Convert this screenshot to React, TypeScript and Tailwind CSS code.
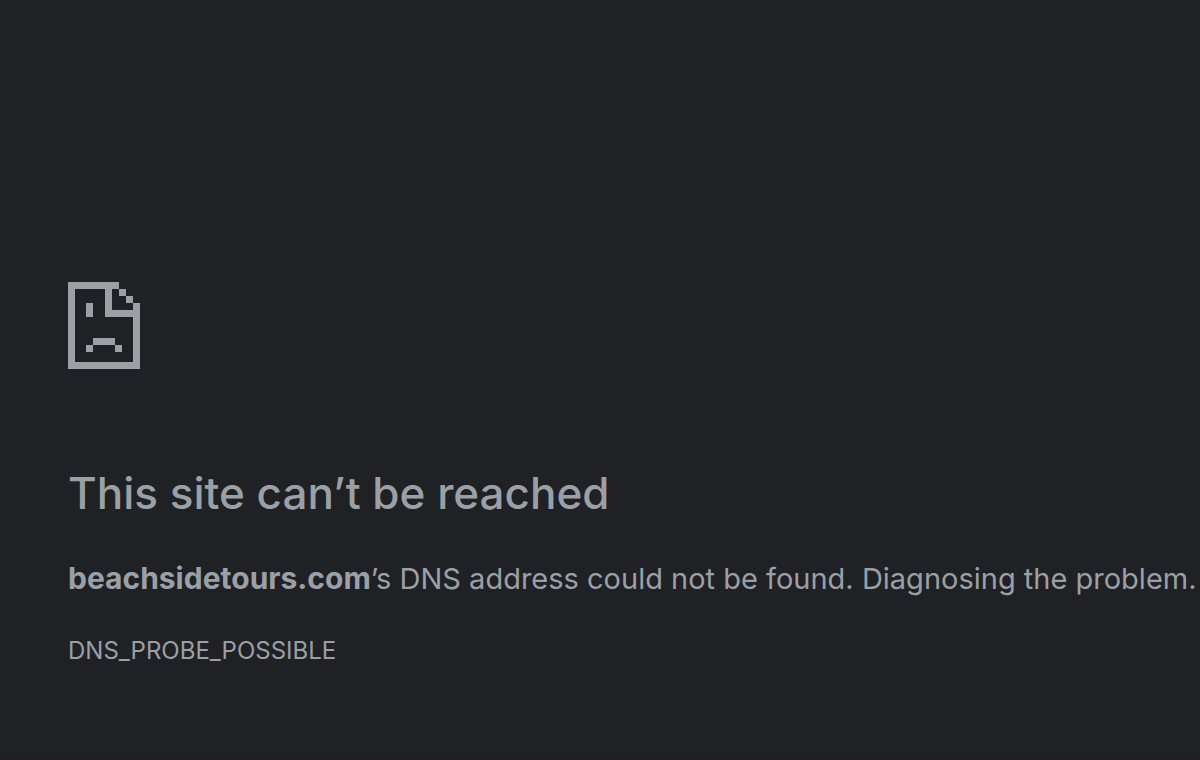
export default function App() {
  return (
    <main className="flex min-h-screen flex-col justify-end overflow-x-hidden border-b border-[#231920] bg-[#202124] px-[68px] pb-[92px] font-['Inter',sans-serif] text-[#9aa0a6]">
      <svg className="h-[87px] w-[72px]" viewBox="0 0 72 87" fill="currentColor" shapeRendering="crispEdges" aria-hidden="true">
        <path d="M0 0H51V7H44V28H65V21H72V87H0ZM7 7V80H65V35H37V7Z" fillRule="evenodd" />
        <path d="M51 7h7v7h-7zM58 14h7v7h-7zM18 21h7v14h-7zM25 56h22v7H25zM18 63h7v7h-7zM47 63h7v7h-7z" />
      </svg>
      <h1 className="mt-24 text-[44px] leading-[56px] font-medium">This site can’t be reached</h1>
      <p className="mt-[34px] text-[29px] leading-[48px] whitespace-nowrap">
        <strong className="text-[30px] leading-none font-bold">beachsidetours.com</strong>’s DNS address could not be found. Diagnosing the problem.
      </p>
      <p className="mt-8 text-2xl leading-8">DNS_PROBE_POSSIBLE</p>
    </main>
  );
}
